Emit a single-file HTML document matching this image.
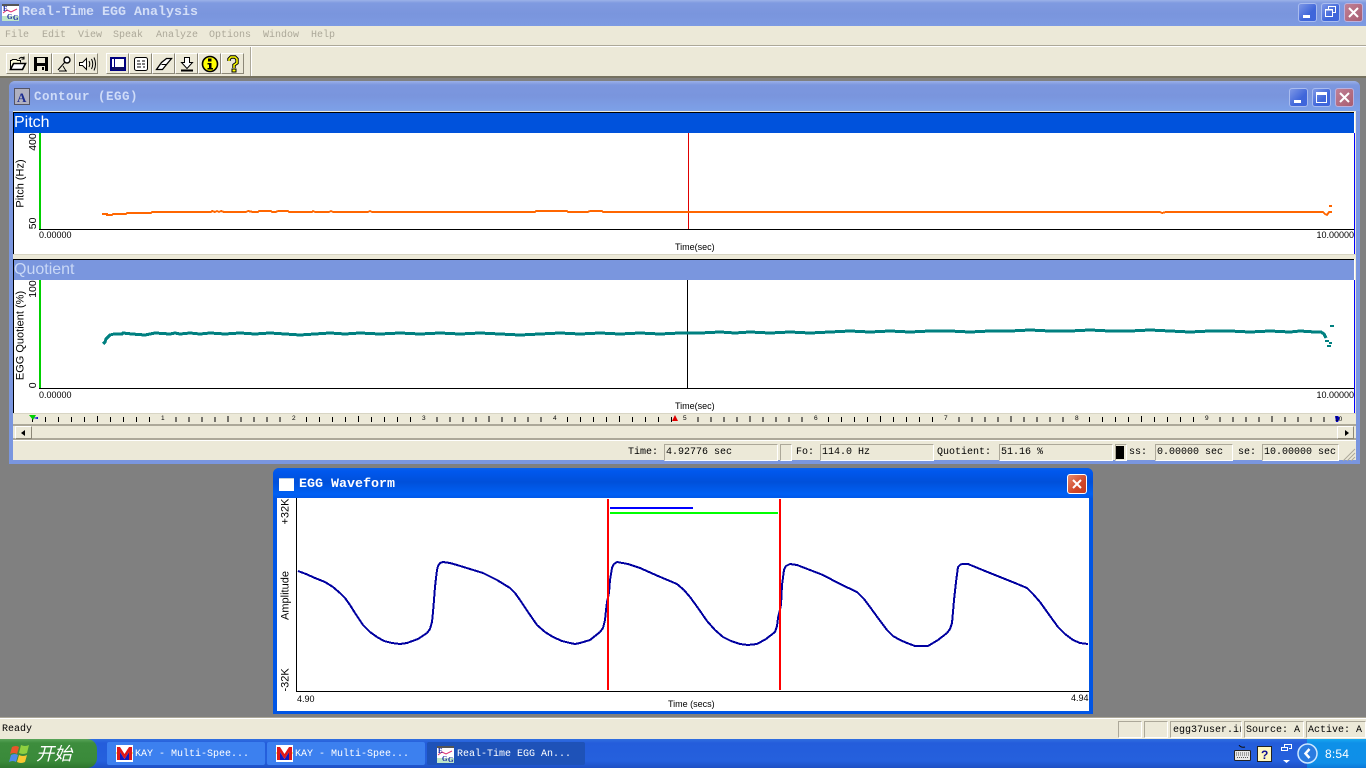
<!DOCTYPE html>
<html><head><meta charset="utf-8"><title>Real-Time EGG Analysis</title>
<style>
html,body{margin:0;padding:0;width:1366px;height:768px;overflow:hidden;background:#808080}
div,svg,span.t{position:absolute}
.t{position:absolute;white-space:pre;line-height:1;font-family:"Liberation Mono",monospace;font-size:10px;color:#000}
.s{font-family:"Liberation Sans",sans-serif;font-size:9px;color:#000}
.r{transform:rotate(-90deg);transform-origin:center center;text-align:center}
.bg{background:#ece9d8}
.sunk{background:#ece9d8;border:1px solid;border-color:#aca899 #fff #fff #aca899;box-sizing:border-box}
.tb{background:#ece9d8;border:1px solid;border-color:#fff #8c8878 #8c8878 #fff;box-sizing:border-box;width:23px;height:21px;top:53px}
.wb{width:19px;height:19px;box-sizing:border-box;border:1px solid #a9bcef;border-radius:3px;background:linear-gradient(135deg,#7e98e6,#3f66da 60%,#3f66dc)}
.wc{background:linear-gradient(135deg,#c08095,#a85c70);border-color:#bcb0dc}
.task{height:23px;top:742px;box-sizing:border-box;border-radius:2px;background:#3c80ef;color:#fff}
</style></head><body>

<!-- main title -->
<div style="left:0;top:0;width:1366px;height:26px;background:linear-gradient(#9cb2e8 0,#7f9ae0 3px,#7a95dd 14px,#7d9ae2 26px)"></div>
<svg style="left:2px;top:4px" width="17" height="17" viewBox="0 0 17 17"><rect width="17" height="17" fill="#fff"/><rect x="0" y="0" width="17" height="2" fill="#555"/><rect x="0" y="12" width="17" height="5" fill="#bfe6c8"/><path d="M1 9l4-3 4 2 6-3" stroke="#e03070" fill="none"/><text x="1" y="7" font-size="7" font-family="Liberation Serif" font-weight="bold" fill="#1020a0">E</text><text x="5" y="15" font-size="7" font-family="Liberation Serif" font-weight="bold" fill="#1020a0">G</text><text x="11" y="16" font-size="7" font-family="Liberation Serif" font-weight="bold" fill="#1020a0">G</text></svg>
<span class="t" style="left:22px;top:6px;font-size:13.33px;font-weight:bold;color:#d3def7">Real-Time EGG Analysis</span>
<div class="wb" style="left:1298px;top:3px"><div style="left:4px;top:11px;width:7px;height:3px;background:#fff"></div></div>
<div class="wb" style="left:1321px;top:3px"><svg style="left:3px;top:2px" width="12" height="12"><path d="M3.500 3.500V.5h7v6H8M.5 3.500h7v7h-7z" fill="none" stroke="#fff" stroke-width="1"/><path d="M1 4h6" stroke="#fff"/></svg></div>
<div class="wb wc" style="left:1344px;top:3px"><svg style="left:2px;top:2px" width="13" height="13"><path d="M2 2l9 9M11 2l-9 9" stroke="#fff" stroke-width="2"/></svg></div>

<!-- menu -->
<div class="bg" style="left:0;top:26px;width:1366px;height:20px"></div>
<span class="t" style="left:5px;top:31px;color:#aca899">File</span>
<span class="t" style="left:42px;top:31px;color:#aca899">Edit</span>
<span class="t" style="left:78px;top:31px;color:#aca899">View</span>
<span class="t" style="left:113px;top:31px;color:#aca899">Speak</span>
<span class="t" style="left:156px;top:31px;color:#aca899">Analyze</span>
<span class="t" style="left:209px;top:31px;color:#aca899">Options</span>
<span class="t" style="left:263px;top:31px;color:#aca899">Window</span>
<span class="t" style="left:311px;top:31px;color:#aca899">Help</span>
<div style="left:0;top:45px;width:1366px;height:1px;background:#aca899"></div>
<div style="left:0;top:46px;width:1366px;height:1px;background:#fff"></div>

<!-- toolbar -->
<div class="bg" style="left:0;top:47px;width:1366px;height:29px"></div>
<div style="left:250px;top:47px;width:1px;height:29px;background:#aca899"></div>
<div style="left:251px;top:47px;width:1px;height:29px;background:#fff"></div>
<div style="left:0;top:76px;width:1366px;height:2px;background:#75715f"></div>
<div class="tb" style="left:6px"><svg style="left:2px;top:2px" width="18" height="16" viewBox="0 0 18 16"><path d="M1.500 13.500V4.500h1l1-1h4l1 1h3v2" fill="#ffd" stroke="#000"/><path d="M1.500 13.500l3-6h12l-3 6z" fill="#fff" stroke="#000" stroke-width="1.600"/><path d="M10 3c1-2 3-2 5-1M15 .5V3h-2.500" fill="none" stroke="#000"/></svg></div>
<div class="tb" style="left:29px"><svg style="left:3px;top:2px" width="16" height="16"><rect x="1" y="1" width="14" height="14" fill="#000"/><rect x="4" y="2" width="8" height="5" fill="#ece9d8"/><rect x="4" y="10" width="8" height="5" fill="#ece9d8"/><rect x="9" y="11" width="2" height="3" fill="#000"/></svg></div>
<div class="tb" style="left:52px"><svg style="left:3px;top:2px" width="16" height="16"><path d="M2 14l7-8" stroke="#000" stroke-width="1"/><path d="M3 15h8M7 10l3 5" stroke="#000" stroke-width=".9"/><circle cx="11" cy="4" r="3" fill="#fff" stroke="#000" stroke-width="1.400"/></svg></div>
<div class="tb" style="left:75px"><svg style="left:2px;top:2px" width="18" height="16"><path d="M1.500 6.500h3l4-4v11l-4-4h-3z" fill="#fff" stroke="#000"/><path d="M11 5q1.500 3 0 6M13.500 3q2.500 5 0 10M16 1.500q3 6.500 0 13" fill="none" stroke="#000"/></svg></div>
<div class="tb" style="left:106px"><svg style="left:3px;top:2px" width="16" height="16" shape-rendering="crispEdges"><rect x="1" y="2" width="14" height="12" fill="#fff"/><path d="M1 2h14v12H1z" fill="none" stroke="#000080" stroke-width="2"/><rect x="2" y="11" width="12" height="3" fill="#101060"/><path d="M4.500 2v10" stroke="#000080"/></svg></div>
<div class="tb" style="left:129px"><svg style="left:3px;top:2px" width="16" height="16"><rect x="1.500" y="1.500" width="13" height="13" rx="2" fill="#fff" stroke="#000"/><path d="M4 5h3M9 5h3M4 8h4M9 8h3M4 11h4M10 11h2" stroke="#000"/></svg></div>
<div class="tb" style="left:152px"><svg style="left:2px;top:3px" width="18" height="14"><path d="M1.500 12.500l5-7 5-4h5l-5 6-4 5z" fill="#fff" stroke="#000" stroke-width="1.300"/><path d="M11.500 7.500h-5" stroke="#000"/></svg></div>
<div class="tb" style="left:175px"><svg style="left:3px;top:2px" width="16" height="16"><path d="M5.500 1.500h5v5h3l-5.500 6-5.500-6h3z" fill="#fff" stroke="#000"/><path d="M2 14.500h12" stroke="#000" stroke-width="2"/></svg></div>
<div class="tb" style="left:198px"><svg style="left:2px;top:1px" width="18" height="18"><circle cx="9" cy="9" r="7.500" fill="#ff0" stroke="#000" stroke-width="1.600"/><rect x="7" y="3.500" width="3.500" height="3" fill="#000"/><path d="M6.500 8h4v5h1.500v1.500H6.500V13H8V9.500H6.500z" fill="#000"/></svg></div>
<div class="tb" style="left:221px"><svg style="left:3px;top:1px" width="16" height="18"><path d="M4 6V4l2-2h4l2 2v4l-3 2v3" fill="none" stroke="#000" stroke-width="3.400"/><path d="M4 6V4l2-2h4l2 2v4l-3 2v3" fill="none" stroke="#ff0" stroke-width="1.500"/><rect x="7" y="14" width="4" height="3" fill="#ff0" stroke="#000"/></svg></div>

<!-- Contour window -->
<div style="left:9px;top:81px;width:1351px;height:383px;background:#7a96df;border-radius:6px 6px 0 0"></div>
<div style="left:9px;top:81px;width:1351px;height:30px;background:linear-gradient(#9bb0e8 0,#7c97df 4px,#7a95dd 15px,#7da1e8 30px);border-radius:6px 6px 0 0"></div>
<div style="left:14px;top:88px;width:16px;height:17px;background:#b0b0c0;border:1px solid #556;box-sizing:border-box"><span class="t" style="left:2px;top:1px;font:bold 13px 'Liberation Serif',serif;color:#1c2c90">A</span></div>
<span class="t" style="left:34px;top:91px;font-weight:bold;color:#cfdcf8;font-size:12.5px;letter-spacing:.5px">Contour (EGG)</span>
<div class="wb" style="left:1289px;top:88px"><div style="left:4px;top:11px;width:7px;height:3px;background:#fff"></div></div>
<div class="wb" style="left:1312px;top:88px"><div style="left:3px;top:3px;width:11px;height:11px;border:1px solid #fff;border-top-width:3px;box-sizing:border-box"></div></div>
<div class="wb wc" style="left:1335px;top:88px"><svg style="left:2px;top:2px" width="13" height="13"><path d="M2 2l9 9M11 2l-9 9" stroke="#fff" stroke-width="2"/></svg></div>

<!-- contour client -->
<div class="bg" style="left:13px;top:111px;width:1343px;height:349px"></div>
<!-- pitch panel -->
<div style="left:13px;top:112px;width:1342px;height:142px;background:#fff"></div>
<div style="left:13px;top:112px;width:1341px;height:1px;background:#000"></div>
<div style="left:13px;top:112px;width:1px;height:142px;background:#000"></div>
<div style="left:1354px;top:133px;width:1px;height:121px;background:#0000ff"></div>
<div style="left:14px;top:113px;width:1340px;height:20px;background:#0052dc"></div>
<span class="t s" style="left:14px;top:115px;font-size:16px;color:#fff">Pitch</span>
<div style="left:39px;top:133px;width:2px;height:96px;background:#00d000"></div>
<div style="left:39px;top:229px;width:1315px;height:1px;background:#000"></div>
<div style="left:688px;top:133px;width:1px;height:96px;background:#e00000"></div>
<div class="t s r" style="left:-9px;top:178px;width:60px;font-size:11px">Pitch (Hz)</div>
<div class="t s r" style="left:18px;top:143px;width:30px;font-size:10.5px;text-align:right">400</div>
<div class="t s r" style="left:18px;top:209px;width:30px;font-size:10.5px;text-align:left">50</div>
<span class="t s" style="left:39px;top:231px">0.00000</span>
<span class="t s" style="left:1300px;top:231px;width:54px;text-align:right">10.00000</span>
<span class="t s" style="left:675px;top:243px">Time(sec)</span>
<svg style="left:0;top:0" width="1366" height="258" shape-rendering="crispEdges">
<polyline fill="none" stroke="#ff6600" stroke-width="2" points="102,214 107,214 107,215 112,215 113,214 126,214 127,213 151,213 152,212 211,212 212,211 215,212 217,211 219,212 221,211 224,212 246,212 248,211 253,212 258,212 259,211 271,211 272,212 276,212 278,211 288,211 289,212 312,212 313,211 315,212 329,212 331,211 333,212 368,212 370,211 372,212 535,212 536,211 567,211 568,212 588,212 590,211 602,211 603,212 1160,212 1162,213 1166,212 1323,212 1325,214 1327,215 1329,212 1332,212"/>
<rect x="1329" y="205" width="3" height="2" fill="#ff6600"/>
</svg>
<!-- splitter -->
<div style="left:13px;top:254px;width:1343px;height:5px;background:#ece9d8"></div>
<div style="left:13px;top:254px;width:1343px;height:1px;background:#d8d5c4"></div>
<!-- quotient -->
<div style="left:13px;top:259px;width:1342px;height:154px;background:#fff"></div>
<div style="left:13px;top:259px;width:1341px;height:1px;background:#000"></div>
<div style="left:13px;top:259px;width:1px;height:154px;background:#000"></div>
<div style="left:1354px;top:280px;width:1px;height:133px;background:#0000ff"></div>
<div style="left:14px;top:260px;width:1340px;height:20px;background:#7a96de"></div>
<span class="t s" style="left:14px;top:262px;font-size:16px;color:#c9d8f6">Quotient</span>
<div style="left:39px;top:280px;width:2px;height:108px;background:#00d000"></div>
<div style="left:39px;top:388px;width:1315px;height:1px;background:#000"></div>
<div style="left:687px;top:280px;width:1px;height:108px;background:#000"></div>
<div class="t s r" style="left:-29px;top:330px;width:100px;font-size:11px">EGG Quotient (%)</div>
<div class="t s r" style="left:18px;top:290px;width:30px;font-size:10.5px;text-align:right">100</div>
<div class="t s r" style="left:18px;top:368px;width:30px;font-size:10.5px;text-align:left">0</div>
<span class="t s" style="left:39px;top:391px">0.00000</span>
<span class="t s" style="left:1300px;top:391px;width:54px;text-align:right">10.00000</span>
<span class="t s" style="left:675px;top:402px">Time(sec)</span>
<svg style="left:0;top:0" width="1366" height="468" shape-rendering="crispEdges">
<polyline fill="none" stroke="#008080" stroke-width="3" points="103,344 105,342 106,339 108,337 110,335 114,334 122,334 123,333 132,334 145,335 150,334 155,333 170,334 175,333 180,334 190,333 200,334 210,333 225,334 240,333 255,334 270,333 285,334 300,335 315,334 330,333 345,334 360,333 380,334 400,333 420,334 440,333 460,334 480,333 500,334 520,335 540,334 560,333 580,334 600,333 620,334 640,333 660,334 680,333 700,333 720,332 735,333 750,332 770,333 790,332 810,333 830,332 850,331 870,332 890,331 910,332 930,331 950,331 970,332 990,331 1010,331 1030,330 1050,331 1070,331 1090,330 1110,331 1130,331 1150,330 1170,331 1190,332 1210,331 1230,331 1250,332 1270,331 1290,332 1300,331 1315,332 1321,332 1324,334 1326,338"/>
<rect x="1330" y="325" width="4" height="2" fill="#008080"/><rect x="1325" y="340" width="4" height="2" fill="#008080"/><rect x="1329" y="342" width="3" height="2" fill="#008080"/><rect x="1327" y="345" width="4" height="2" fill="#008080"/>
</svg>

<!-- ruler -->
<div class="bg" style="left:13px;top:413px;width:1343px;height:13px;border-top:1px solid #d8d5c4;box-sizing:border-box"></div>
<svg style="left:0;top:410px" width="1366" height="16" shape-rendering="crispEdges">
<defs><pattern id="tk" patternUnits="userSpaceOnUse" x="32" y="0" width="130.5" height="16">
<path d="M.5 7v5M13.500 7v5M26.500 7v5M39.500 7v5M52.500 7v5M65.500 6v6M78.500 7v5M91.500 7v5M104.500 7v5M117.500 7v5" stroke="#000" fill="none"/>
</pattern></defs>
<rect x="32" y="0" width="1306" height="16" fill="url(#tk)"/>
</svg>
<svg style="left:0;top:410px" width="1366" height="16">
<path d="M29 5h7l-3 5z" fill="#00d000"/><path d="M33 8l5-1v2z" fill="#0000d0"/>
<path d="M675 5l3 6h-6z" fill="#e00000"/><path d="M1335 6h3l2 2-2 4h-2z" fill="#0000d0"/>
</svg>
<span class="t s" style="left:160px;top:416px;font-size:6.500px;background:#ece9d8;padding:0 1px">1</span>
<span class="t s" style="left:291px;top:416px;font-size:6.500px;background:#ece9d8;padding:0 1px">2</span>
<span class="t s" style="left:421px;top:416px;font-size:6.500px;background:#ece9d8;padding:0 1px">3</span>
<span class="t s" style="left:552px;top:416px;font-size:6.500px;background:#ece9d8;padding:0 1px">4</span>
<span class="t s" style="left:682px;top:416px;font-size:6.500px;background:#ece9d8;padding:0 1px">5</span>
<span class="t s" style="left:813px;top:416px;font-size:6.500px;background:#ece9d8;padding:0 1px">6</span>
<span class="t s" style="left:943px;top:416px;font-size:6.500px;background:#ece9d8;padding:0 1px">7</span>
<span class="t s" style="left:1074px;top:416px;font-size:6.500px;background:#ece9d8;padding:0 1px">8</span>
<span class="t s" style="left:1204px;top:416px;font-size:6.500px;background:#ece9d8;padding:0 1px">9</span>
<span class="t s" style="left:1335px;top:417px;font-size:6.500px">10</span>

<!-- scrollbar -->
<div style="left:13px;top:424px;width:1343px;height:2px;background:#aca899"></div>
<div style="left:13px;top:426px;width:1343px;height:13px;background:#ece9d8"></div>
<div style="left:13px;top:438px;width:1343px;height:2px;background:#aca899"></div>
<div style="left:13px;top:440px;width:1343px;height:1px;background:#fff"></div>
<div class="tb" style="left:15px;top:426px;width:17px;height:13px"><div style="left:5px;top:3px;border:3px solid transparent;border-right:4px solid #000;border-left:0"></div></div>
<div class="tb" style="left:1337px;top:426px;width:17px;height:13px"><div style="left:7px;top:3px;border:3px solid transparent;border-left:4px solid #000;border-right:0"></div></div>

<!-- status row -->
<span class="t" style="left:628px;top:448px">Time:</span>
<div class="sunk" style="left:664px;top:444px;width:114px;height:17px"></div><span class="t" style="left:666px;top:448px">4.92776 sec</span>
<div class="sunk" style="left:780px;top:444px;width:12px;height:17px"></div>
<span class="t" style="left:796px;top:448px">Fo:</span>
<div class="sunk" style="left:820px;top:444px;width:114px;height:17px"></div><span class="t" style="left:822px;top:448px">114.0 Hz</span>
<span class="t" style="left:937px;top:448px">Quotient:</span>
<div class="sunk" style="left:999px;top:444px;width:114px;height:17px"></div><span class="t" style="left:1001px;top:448px">51.16 %</span>
<div class="sunk" style="left:1115px;top:444px;width:12px;height:17px"></div><div style="left:1116px;top:446px;width:8px;height:13px;background:#000"></div>
<span class="t" style="left:1129px;top:448px">ss:</span>
<div class="sunk" style="left:1155px;top:444px;width:78px;height:17px"></div><span class="t" style="left:1157px;top:448px">0.00000 sec</span>
<span class="t" style="left:1238px;top:448px">se:</span>
<div class="sunk" style="left:1262px;top:444px;width:77px;height:17px"></div><span class="t" style="left:1264px;top:448px">10.00000 sec</span>
<svg style="left:1342px;top:448px" width="14" height="13"><path d="M13 1L1 13M13 5l-8 8M13 9l-4 4" stroke="#aca899" fill="none"/></svg>

<!-- Waveform window -->
<div style="left:273px;top:468px;width:820px;height:246px;background:#0055e5;border-radius:6px 6px 0 0"></div>
<div style="left:273px;top:468px;width:820px;height:30px;background:linear-gradient(#0a5fe8 0,#0058ee 3px,#0050da 14px,#0060f4 26px,#0058e8 30px);border-radius:6px 6px 0 0"></div>
<div style="left:279px;top:478px;width:15px;height:12px;background:#fff;border-top:1px solid #bcd"></div>
<span class="t" style="left:299px;top:478px;font-size:13.33px;font-weight:bold;color:#fff">EGG Waveform</span>
<div style="left:1067px;top:474px;width:20px;height:20px;box-sizing:border-box;border:1px solid #fff;border-radius:3px;background:linear-gradient(135deg,#e88a6c,#d0482a 60%,#c83c20)"><svg style="left:2px;top:2px" width="14" height="14"><path d="M3 3l8 8M11 3l-8 8" stroke="#fff" stroke-width="2"/></svg></div>
<div style="left:277px;top:498px;width:812px;height:213px;background:#fff"></div>
<div style="left:296px;top:498px;width:1px;height:193px;background:#000"></div>
<div style="left:296px;top:691px;width:793px;height:1px;background:#000"></div>
<div class="t s r" style="left:266px;top:513px;width:40px;font-size:11px;text-align:right">+32K</div>
<div class="t s r" style="left:256px;top:590px;width:60px;font-size:11px">Amplitude</div>
<div class="t s r" style="left:266px;top:666px;width:40px;font-size:11px;text-align:left">-32K</div>
<span class="t s" style="left:297px;top:695px">4.90</span>
<span class="t s" style="left:668px;top:700px">Time (secs)</span>
<span class="t s" style="left:1071px;top:694px">4.94</span>
<svg style="left:0;top:0" width="1366" height="768" shape-rendering="crispEdges">
<polyline fill="none" stroke="#0000a0" stroke-width="2" points="298,571 306,574 315,578 325,582 333,587 340,593 345,598 350,605 355,613 363,625 370,632 377,637 384,641 392,643 400,644 407,643 418,639 427,633 430,629 432,622 433,612 434,600 435,587 436,578 437,570 438,566 440,563 443,562 450,563 457,565 470,569 483,573 497,580 510,588 515,593 520,600 528,612 537,625 545,632 553,637 562,641 570,643 575,644 580,643 590,640 600,632 603,628 605,620 606,610 607,602 609,593 610,580 612,568 614,564 617,562 628,564 640,568 658,576 677,584 684,590 690,597 698,608 707,621 715,630 723,637 731,641 740,644 748,645 757,644 766,639 775,632 777,626 778,618 781,605 782,585 784,570 786,566 790,564 797,565 810,570 823,575 840,584 857,592 864,599 870,607 878,618 887,630 893,636 900,640 907,643 915,646 921,646 928,646 938,640 947,633 950,629 952,623 953,612 954,600 956,582 958,567 960,565 962,564 968,564 985,571 1000,577 1015,583 1027,588 1033,594 1040,602 1050,616 1058,627 1065,634 1073,640 1080,643 1088,644"/>
<rect x="607" y="499" width="2" height="191" fill="#ff0000"/>
<rect x="779" y="499" width="2" height="191" fill="#ff0000"/>
<rect x="610" y="507" width="83" height="2" fill="#0000ff"/>
<rect x="610" y="512" width="168" height="2" fill="#00ff00"/>
</svg>

<!-- status bar -->
<div class="bg" style="left:0;top:717px;width:1366px;height:22px;border-top:1px solid #aca899;box-sizing:border-box"></div>
<div style="left:0;top:718px;width:1366px;height:1px;background:#fff"></div>
<span class="t" style="left:2px;top:725px">Ready</span>
<div class="sunk" style="left:1118px;top:721px;width:24px;height:17px"></div>
<div class="sunk" style="left:1144px;top:721px;width:24px;height:17px"></div>
<div class="sunk" style="left:1170px;top:721px;width:72px;height:17px;overflow:hidden"><span class="t" style="left:2px;top:4px">egg37user.ir</span></div>
<div class="sunk" style="left:1244px;top:721px;width:60px;height:17px"></div><span class="t" style="left:1246px;top:726px">Source: A</span>
<div class="sunk" style="left:1306px;top:721px;width:60px;height:17px"></div><span class="t" style="left:1308px;top:726px">Active: A</span>

<!-- taskbar -->
<div style="left:0;top:739px;width:1366px;height:29px;background:linear-gradient(#2f6fe0 0,#2a66de 2px,#245ddb 4px,#2560dd 22px,#1e4fc4 29px)"></div>
<div style="left:0;top:739px;width:97px;height:29px;background:linear-gradient(#5aa55a 0,#3d8d3d 4px,#3a8a3a 22px,#2e752e 29px);border-radius:0 10px 10px 0"></div>
<svg style="left:9px;top:743px" width="22" height="21"><path d="M3 4q4-2 7 0l-2 7q-3-2-7 0z" fill="#e8562a"/><path d="M11 1q4 2 8 0l-2 8q-4 2-8 0z" fill="#8ed040" transform="translate(1 1)"/><path d="M1 12q4-2 7 0l-2 7q-3-2-7 0z" fill="#4d8ae8" transform="translate(1 0)"/><path d="M9 12q4 2 8 0l-2 7q-4 2-8 0z" fill="#f8c830" transform="translate(1 0)"/></svg>
<span class="t" style="left:36px;top:744px;font:italic 18px 'Noto Sans CJK SC','WenQuanYi Zen Hei',sans-serif;color:#fff;line-height:18px">开始</span>

<div class="task" style="left:107px;width:158px"><svg style="left:9px;top:3px" width="17" height="17"><rect width="17" height="17" fill="#fff"/><path d="M4 7l4.500 7L13 7v8H4z" fill="#1018c0"/><path d="M1 15V2h3l4.500 7L13 2h3v13h-3V7l-4.500 7L4 7v8z" fill="#e01818"/><path d="M0 8h1M16 8h1" stroke="#f0d000"/></svg><span class="t" style="left:28px;top:8px;color:#fff">KAY - Multi-Spee...</span></div>
<div class="task" style="left:267px;width:158px"><svg style="left:9px;top:3px" width="17" height="17"><rect width="17" height="17" fill="#fff"/><path d="M4 7l4.500 7L13 7v8H4z" fill="#1018c0"/><path d="M1 15V2h3l4.500 7L13 2h3v13h-3V7l-4.500 7L4 7v8z" fill="#e01818"/><path d="M0 8h1M16 8h1" stroke="#f0d000"/></svg><span class="t" style="left:28px;top:8px;color:#fff">KAY - Multi-Spee...</span></div>
<div class="task" style="left:427px;width:158px;background:#1e52b8"><svg style="left:10px;top:4px" width="17" height="17"><rect width="17" height="17" fill="#fff"/><rect width="17" height="2" fill="#555"/><rect y="12" width="17" height="5" fill="#bfe6c8"/><path d="M1 9l4-3 4 2 6-3" stroke="#e03070" fill="none"/><text x="1" y="7" font-size="7" font-family="Liberation Serif" font-weight="bold" fill="#1020a0">E</text><text x="5" y="15" font-size="7" font-family="Liberation Serif" font-weight="bold" fill="#1020a0">G</text><text x="11" y="16" font-size="7" font-family="Liberation Serif" font-weight="bold" fill="#1020a0">G</text></svg><span class="t" style="left:30px;top:8px;color:#fff">Real-Time EGG An...</span></div>

<!-- tray -->
<div style="left:1307px;top:739px;width:59px;height:29px;background:linear-gradient(#18a8f0 0,#0e90e8 4px,#0f8fe8 24px,#0c78d8 29px)"></div>
<svg style="left:1234px;top:745px" width="17" height="17"><path d="M5 0q2 3 6 2" stroke="#111" fill="none"/><rect x=".5" y="5.500" width="16" height="10" rx="1" fill="#e8e8e8" stroke="#222"/><path d="M2 8h13M2 10h13M3 12.500h11" stroke="#555" stroke-dasharray="1 1"/></svg>
<div style="left:1257px;top:746px;width:13px;height:14px;background:#fff8c0;border:1px solid #222"><span class="t" style="left:3px;top:1px;font:bold 12px 'Liberation Sans',sans-serif;color:#101090">?</span></div>
<svg style="left:1281px;top:744px" width="12" height="20"><path d="M3.500 3.500V.5h7v4H8M.5 3.500h6v3h-6z" fill="none" stroke="#fff"/><path d="M2 16h7l-3.500 3z" fill="#fff"/></svg>
<svg style="left:1297px;top:743px" width="21" height="21"><circle cx="10.500" cy="10.500" r="9.500" fill="#2a7be0" stroke="#cfe8ff" stroke-width="1.500"/><path d="M12.500 6l-4 4.500 4 4.500" fill="none" stroke="#fff" stroke-width="2.500"/></svg>
<span class="t s" style="left:1325px;top:748px;color:#fff;font-size:12px;letter-spacing:.2px">8:54</span>
</body></html>
